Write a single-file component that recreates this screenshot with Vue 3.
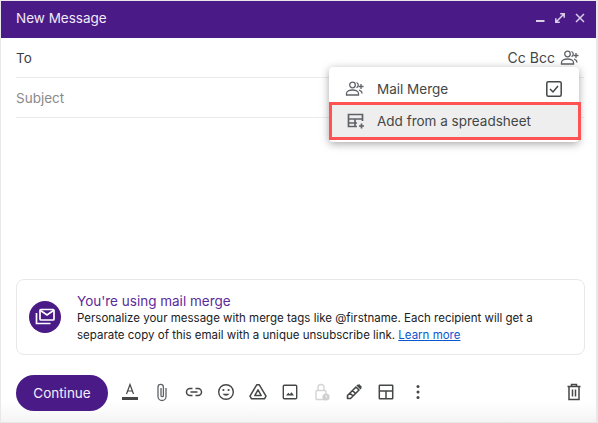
<template>
  <div class="page">
    <div class="compose">
      <header class="titlebar">
        <span class="title">New Message</span>
        <div class="win-btns">
          <svg width="9" height="10" viewBox="0 0 9 10"><rect x="0" y="7" width="8.500" height="2" fill="#d9cfe8" /></svg>
          <svg width="10" height="10" viewBox="0 0 10 10" fill="none" stroke="#d9cfe8" stroke-width="1.500"><path d="M.8 9.200 9.200.8M5.200.8h4v4M.8 5.200v4h4" /></svg>
          <svg width="10" height="10" viewBox="0 0 10 10" fill="none" stroke="#d9cfe8" stroke-width="1.500"><path d="M1 1l8 8M9 1 1 9" /></svg>
        </div>
      </header>

      <div class="field">
        <span class="to">To</span>
        <div class="recipients">
          <span>Cc</span>
          <span>Bcc</span>
          <svg class="add-people" width="20" height="16" viewBox="0 0 20 16" fill="none" stroke="#5f6368" stroke-width="1.300"><circle cx="7.500" cy="4" r="2.800" /><path d="M1.500 14v-1.500c0-2.200 3-3.500 6-3.500s6 1.300 6 3.500V14z" /><path d="M11.500 1.500a2.800 2.800 0 0 1 0 5.200M14 9c1.500.5 3 1.500 3 3.500" /><path d="M16 3v5M13.500 5.500h5" /></svg>
        </div>
      </div>
      <div class="field subject">Subject</div>

      <div class="body"></div>

      <div class="banner">
        <div class="banner-icon">
          <svg width="20" height="20" viewBox="0 0 20 20" fill="none" stroke="#fff" stroke-width="1.700"><rect x="5" y="2.500" width="14" height="10.500" rx="1" /><path d="M5.500 3.500 12 8l6.500-4.500" /><path d="M1.500 6v10.500h14" /></svg>
        </div>
        <div class="banner-text">
          <div class="banner-title">You're using mail merge</div>
          <p>Personalize your message with merge tags like @firstname. Each recipient will get a separate copy of this email with a unique unsubscribe link. <a href="#">Learn more</a></p>
        </div>
      </div>

      <footer class="toolbar">
        <button class="continue">Continue</button>
        <div class="tools">
          <svg v-for="ic in tools" :key="ic.name" class="tool" width="20" height="20" viewBox="0 0 20 20" v-html="ic.svg"></svg>
        </div>
        <svg class="trash" width="20" height="20" viewBox="0 0 20 20" fill="none" stroke="#444746" stroke-width="1.500"><path d="M3.500 4.500h13M7.500 4.500v-2h5v2M5 4.500v13h10v-13" /><path d="M8.500 7.500v7M11.500 7.500v7" /></svg>
      </footer>
    </div>

    <div class="menu">
      <div class="menu-item first">
        <svg width="20" height="16" viewBox="0 0 20 16" fill="none" stroke="#5f6368" stroke-width="1.300"><circle cx="7.500" cy="4" r="2.800" /><path d="M1.500 14v-1.500c0-2.200 3-3.500 6-3.500s6 1.300 6 3.500V14z" /><path d="M11.500 1.500a2.800 2.800 0 0 1 0 5.200M14 9c1.500.5 3 1.500 3 3.500" /><path d="M16 3v5M13.500 5.500h5" /></svg>
        <span>Mail Merge</span>
        <svg class="check" width="18" height="18" viewBox="0 0 18 18" fill="none" stroke="#444746" stroke-width="1.500"><rect x="1.800" y="1.800" width="14.400" height="14.400" rx="1.500" /><path d="M5 9l3 3 5-6" /></svg>
      </div>
      <div class="menu-item active">
        <svg width="20" height="18" viewBox="0 0 20 18" fill="none" stroke="#5f6368" stroke-width="1.700"><path d="M11 14.500H2.500V2.500h14V9" /><path d="M2.500 7h14M2.500 11h8.500M9 7v7.500" /><path d="M15.500 11.500v5M13 14h5" /></svg>
        <span>Add from a spreadsheet</span>
      </div>
    </div>
  </div>
</template>

<script setup>
const tools = [
  { name: 'font', svg: '<path d="M6.500 12 10 2.500l3.500 9.500M7.700 9h4.600" fill="none" stroke="#444746" stroke-width="1.200"/><rect x="2" y="15" width="16" height="3" fill="#444746"/>' },
  { name: 'clip', svg: '<path d="M14 6v8.500a4 4 0 0 1-8 0V5a2.700 2.700 0 0 1 5.400 0v8.500a1.200 1.200 0 0 1-2.400 0V6" fill="none" stroke="#5f6368" stroke-width="1.300"/>' },
  { name: 'link', svg: '<path d="M8.500 6.500H6a3.500 3.500 0 0 0 0 7h2.500M11.500 6.500H14a3.500 3.500 0 0 1 0 7h-2.500M6.500 10h7" fill="none" stroke="#444746" stroke-width="1.500"/>' },
  { name: 'smile', svg: '<circle cx="10" cy="10" r="7.300" fill="none" stroke="#444746" stroke-width="1.400"/><circle cx="7.400" cy="8" r="1.100" fill="#444746"/><circle cx="12.600" cy="8" r="1.100" fill="#444746"/><path d="M6.500 11.800c1.800 2.500 5.200 2.500 7 0z" fill="#444746"/>' },
  { name: 'drive', svg: '<path d="M8.700 2.800h2.600l6.700 11.300-1.500 2.700H3.500L2 14.100zM10 7.800l-3.200 5.700h6.400z" fill="none" stroke="#444746" stroke-width="1.500" stroke-linejoin="round"/>' },
  { name: 'image', svg: '<rect x="3.300" y="3.300" width="13.400" height="13.400" rx="1" fill="none" stroke="#444746" stroke-width="1.400"/><path d="M6 13.500l2.300-2.800 1.500 1.600 1.700-2.100 2.500 3.300z" fill="#444746"/>' },
  { name: 'lock', svg: '<rect x="4" y="8.500" width="10" height="9" rx="1" fill="none" stroke="#d4d4d4" stroke-width="1.400"/><path d="M6 8.500V5.500a3 3 0 0 1 6 0v3" fill="none" stroke="#d4d4d4" stroke-width="1.400"/><circle cx="14" cy="15" r="3.600" fill="#cfcfcf"/><path d="M14 13.200V15l1.200.7" fill="none" stroke="#fff" stroke-width=".8"/>' },
  { name: 'pen', svg: '<path d="M3.500 13.500 12 5l3 3-8.500 8.500h-3zM13 3l4 4M14.500 2.500l3 3M6 11l3 3M8.500 8.500l3 3" fill="none" stroke="#444746" stroke-width="1.600" stroke-linejoin="round"/>' },
  { name: 'layout', svg: '<rect x="3.300" y="3.300" width="13.400" height="13.400" rx=".5" fill="none" stroke="#444746" stroke-width="1.500"/><path d="M3.300 9h13.400M10 9v7.700" fill="none" stroke="#444746" stroke-width="1.500"/>' },
  { name: 'dots', svg: '<circle cx="10" cy="4.500" r="1.500" fill="#444746"/><circle cx="10" cy="10" r="1.500" fill="#444746"/><circle cx="10" cy="15.500" r="1.500" fill="#444746"/>' }
];
</script>

<style>
html, body {
  margin: 0;
  background: #e9e7e9;
}
</style>

<style scoped>
.page {
  position: relative;
  width: 598px;
  height: 423px;
  padding: 1px 2px 1px 1px;
  box-sizing: border-box;
  background: #e9e7e9;
  font-family: Inter, Roboto, "Liberation Sans", sans-serif;
  overflow: hidden;
}
.compose {
  height: 100%;
  display: flex;
  flex-direction: column;
  background: #fff;
}
.titlebar {
  height: 37px;
  flex: none;
  display: flex;
  align-items: center;
  justify-content: space-between;
  padding: 0 11px 3px 15px;
  box-sizing: border-box;
  background: #4a1a87;
  color: #f0eaf7;
  font-size: 13.500px;
}
.win-btns {
  display: flex;
  gap: 10px;
  align-items: center;
}
.field {
  height: 39px;
  margin: 0 12px 0 15px;
  display: flex;
  align-items: center;
  justify-content: space-between;
  border-bottom: 1px solid #ececec;
  font-size: 13.500px;
  flex: none;
}
.to {
  color: #3c4043;
}
.recipients {
  display: flex;
  align-items: center;
  gap: 4px;
  color: #444746;
  font-size: 14px;
  padding-right: 4px;
}
.add-people {
  margin-left: 1px;
}
.subject {
  color: #8a8a8a;
}
.body {
  flex: 1;
}
.banner {
  height: 76px;
  box-sizing: border-box;
  margin: 0 11px 0 15px;
  padding: 0 12px;
  display: flex;
  align-items: center;
  gap: 16px;
  border: 1px solid #e8e8e8;
  border-radius: 8px;
  flex: none;
}
.banner-icon {
  width: 32px;
  height: 32px;
  flex: none;
  border-radius: 50%;
  background: #4a1a87;
  display: flex;
  align-items: center;
  justify-content: center;
}
.banner-text {
  padding-top: 2px;
}
.banner-title {
  color: #5b2b9b;
  font-size: 13.500px;
  line-height: 18px;
}
.banner-text p {
  margin: 0;
  color: #202124;
  font-size: 11.500px;
  line-height: 17px;
}
.banner-text a {
  color: #0b57d0;
}
.toolbar {
  height: 67px;
  flex: none;
  display: flex;
  align-items: center;
  padding: 9px 12px 0 15px;
  box-sizing: border-box;
  background: linear-gradient(#fff 70%, #f4f4f4);
}
.continue {
  width: 92px;
  height: 36px;
  border: 0;
  border-radius: 18px;
  background: #4a1a87;
  color: #f3eef9;
  font: 13.500px Inter, Roboto, "Liberation Sans", sans-serif;
}
.tools {
  display: flex;
  gap: 12px;
  margin: 0 0 2px 12px;
  flex: 1;
}
.tool {
  flex: none;
}
.trash {
  margin-bottom: 2px;
}
.menu {
  position: absolute;
  left: 329px;
  top: 67px;
  width: 250px;
  padding-bottom: 2px;
  background: #fff;
  border-radius: 4px;
  box-shadow: 0 2px 8px rgba(0, 0, 0, .35);
  color: #444746;
  font-size: 13.500px;
}
.menu-item {
  display: flex;
  align-items: center;
  gap: 12px;
  padding: 0 16px;
}
.first {
  height: 35px;
  padding-top: 9px;
  box-sizing: border-box;
}
.check {
  margin-left: auto;
}
.active {
  height: 38px;
  width: 252px;
  box-sizing: border-box;
  background: #eee;
  border: 3px solid #ff5252;
  padding-left: 14px;
  gap: 11px;
}
</style>
